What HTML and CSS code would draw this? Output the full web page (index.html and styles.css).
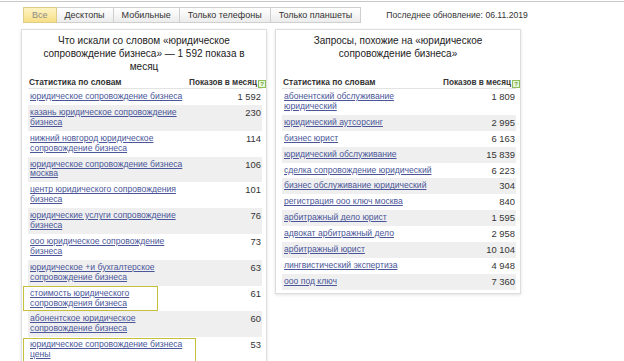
FILE: index.html
```html
<!DOCTYPE html>
<html lang="ru">
<head>
  <meta charset="UTF-8">
  <title>Подбор слов</title>
  <link rel="stylesheet" href="styles.css">
</head>
<body>
  <div class="topline"></div>

  <div class="toolbar">
    <div class="tabs">
      <span class="tab active">Все</span>
      <span class="tab">Десктопы</span>
      <span class="tab">Мобильные</span>
      <span class="tab">Только телефоны</span>
      <span class="tab">Только планшеты</span>
    </div>
    <div class="updated">Последнее обновление: 06.11.2019</div>
  </div>

  <div class="panels">
    <!-- left: what was searched -->
    <div class="panel">
      <div class="panel-title">Что искали со словом «юридическое сопровождение бизнеса» — 1 592 показа в месяц</div>
      <table class="stats">
        <tr class="head">
          <th class="phrase">Статистика по словам</th>
          <th class="count">Показов в месяц<span class="help">?</span></th>
        </tr>
        <tr><td><a href="#">юридическое сопровождение бизнеса</a></td><td class="num">1 592</td></tr>
        <tr class="odd"><td><a href="#">казань юридическое сопровождение бизнеса</a></td><td class="num">230</td></tr>
        <tr><td><a href="#">нижний новгород юридическое сопровождение бизнеса</a></td><td class="num">114</td></tr>
        <tr class="odd"><td><a href="#">юридическое сопровождение бизнеса москва</a></td><td class="num">106</td></tr>
        <tr><td><a href="#">центр юридического сопровождения бизнеса</a></td><td class="num">101</td></tr>
        <tr class="odd"><td><a href="#">юридические услуги сопровождение бизнеса</a></td><td class="num">76</td></tr>
        <tr><td><a href="#">ооо юридическое сопровождение бизнеса</a></td><td class="num">73</td></tr>
        <tr class="odd"><td><a href="#">юридическое +и бухгалтерское сопровождение бизнеса</a></td><td class="num">63</td></tr>
        <tr><td class="marked"><a href="#">стоимость юридического сопровождения бизнеса</a><span class="mark mark-a"></span></td><td class="num">61</td></tr>
        <tr class="odd"><td><a href="#">абонентское юридическое сопровождение бизнеса</a></td><td class="num">60</td></tr>
        <tr><td class="marked"><a href="#">юридическое сопровождение бизнеса цены</a><span class="mark mark-b"></span></td><td class="num">53</td></tr>
      </table>
    </div>

    <!-- right: similar queries -->
    <div class="panel">
      <div class="panel-title">Запросы, похожие на «юридическое сопровождение бизнеса»</div>
      <table class="stats">
        <tr class="head">
          <th class="phrase">Статистика по словам</th>
          <th class="count">Показов в месяц<span class="help">?</span></th>
        </tr>
        <tr><td><a href="#">абонентский обслуживание юридический</a></td><td class="num">1 809</td></tr>
        <tr class="odd"><td><a href="#">юридический аутсорсинг</a></td><td class="num">2 995</td></tr>
        <tr><td><a href="#">бизнес юрист</a></td><td class="num">6 163</td></tr>
        <tr class="odd"><td><a href="#">юридический обслуживание</a></td><td class="num">15 839</td></tr>
        <tr><td><a href="#">сделка сопровождение юридический</a></td><td class="num">6 223</td></tr>
        <tr class="odd"><td><a href="#">бизнес обслуживание юридический</a></td><td class="num">304</td></tr>
        <tr><td><a href="#">регистрация ооо ключ москва</a></td><td class="num">840</td></tr>
        <tr class="odd"><td><a href="#">арбитражный дело юрист</a></td><td class="num">1 595</td></tr>
        <tr><td><a href="#">адвокат арбитражный дело</a></td><td class="num">2 958</td></tr>
        <tr class="odd"><td><a href="#">арбитражный юрист</a></td><td class="num">10 104</td></tr>
        <tr><td><a href="#">лингвистический экспертиза</a></td><td class="num">4 948</td></tr>
        <tr class="odd"><td><a href="#">ооо под ключ</a></td><td class="num">7 360</td></tr>
      </table>
    </div>
  </div>
</body>
</html>
```

FILE: styles.css
```css
body {
  margin: 0;
  font-family: "Liberation Sans", Arial, sans-serif;
  color: #333;
  background: #fff;
  overflow: hidden;
}

.topline {
  height: 1px;
  margin-top: 1px;
  background: #c8c8c8;
}

/* Tabs */
.toolbar {
  display: flex;
  align-items: center;
  padding: 5px 0 0 23px;
}

.tabs {
  display: flex;
}

.tab {
  font-size: 9px;
  line-height: 13px;
  padding: 1px 8px 0;
  border: 1px solid #cfcfcf;
  border-left: none;
  background: linear-gradient(#ffffff, #ececec);
  color: #333;
}

.tab:first-child {
  border-left: 1px solid #cfcfcf;
}

.tab.active {
  background: linear-gradient(#fdf3c4, #f8de86);
  border-color: #e0cc88;
  color: #8a8a8a;
}

.updated {
  margin-left: 25px;
  font-size: 8.6px;
  color: #333;
}

/* Panels */
.panels {
  display: flex;
  gap: 8px;
  padding: 6px 0 0 21px;
}

.panel {
  width: 244px;
  border: 1px solid #dedede;
  box-shadow: 0 1px 3px rgba(0, 0, 0, 0.12);
  background: #fff;
  align-self: flex-start;
  padding-bottom: 3px;
}

.panel-title {
  box-sizing: border-box;
  height: 47px;
  padding: 4px 10px 0;
  font-size: 10px;
  line-height: 13px;
  text-align: center;
  color: #222;
}

.stats {
  width: 234px;
  margin: 0 0 0 6px;
  border-collapse: collapse;
  table-layout: fixed;
}

.stats th {
  height: 11px;
  padding: 0 1px;
  font-size: 8.4px;
  line-height: 11px;
  font-weight: bold;
  text-align: left;
  border-bottom: 1px solid #e3e3e3;
  white-space: nowrap;
  color: #333;
}

.stats th.phrase {
  width: 158px;
}

.stats th.count {
  font-size: 8.2px;
  text-align: right;
  padding-right: 0;
}

.help {
  display: inline-block;
  width: 6px;
  height: 6px;
  line-height: 6px;
  margin-left: 1px;
  border: 1px solid #8cbf5a;
  background: #e9f5d9;
  color: #6aa03a;
  font-size: 6px;
  text-align: center;
  vertical-align: -1px;
}

.stats td {
  font-size: 8.6px;
  line-height: 9.9px;
  padding: 3px 1px 3px 2px;
  vertical-align: top;
}

.stats td.num {
  text-align: right;
  font-size: 9.4px;
  color: #333;
  padding-right: 1px;
  white-space: nowrap;
}

.stats tr.odd td {
  background: #efefef;
}

.stats a {
  color: #4a5699;
  text-decoration: underline;
}

/* highlight annotations */
.marked {
  position: relative;
}

.mark {
  position: absolute;
  box-sizing: border-box;
  border: 1.5px solid #c6bf3c;
}

.mark-a {
  left: -5px;
  top: 0;
  width: 135px;
  height: 25px;
}

.mark-b {
  left: -5px;
  top: 1px;
  width: 173px;
  height: 30px;
}
```
